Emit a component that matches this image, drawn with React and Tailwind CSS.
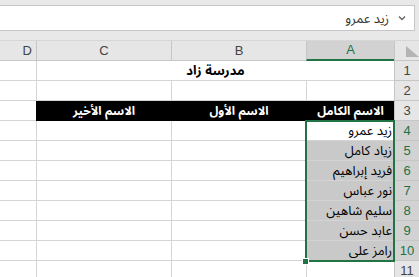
import React from 'react';

const names = ['زيد عمرو', 'زياد كامل', 'فريد إبراهيم', 'نور عباس', 'سليم شاهين', 'عابد حسن', 'رامز على'];

const font = { fontFamily: '"Liberation Sans", "Noto Sans Arabic", "Noto Naskh Arabic", "DejaVu Sans", sans-serif' };

const RowHead = ({ n, selected }) => (
  <div
    className={`h-[20px] flex items-center justify-center text-[13px] border-b border-l border-[#c6c6c6] ${
      selected ? 'bg-[#d2d2d2] text-[#217346]' : 'bg-[#e6e6e6] text-[#444]'
    }`}
  >
    {n}
  </div>
);

const Cell = ({ children, className = '' }) => (
  <div className={`h-[20px] border-b border-l border-[#d4d4d4] whitespace-nowrap ${className}`}>{children}</div>
);

const App = () => {
  return (
    <div dir="rtl" className="relative w-[419px] h-[277px] overflow-hidden bg-white text-black" style={font}>
      {/* formula bar */}
      <div className="h-[41px] bg-[#e8e8e8] pt-[5px] border-b border-[#d6d6d6]">
        <div className="h-[26px] mr-[4px] ml-[-1px] bg-white border border-[#c6c6c6] flex items-center gap-[9px] pr-[8px]">
          <svg width="8" height="6" viewBox="0 0 8 6" className="shrink-0">
            <path d="M1 1.5 L4 4.5 L7 1.5" fill="none" stroke="#666" strokeWidth="1.4" />
          </svg>
          <span className="text-[13px] text-[#333] leading-none">زيد عمرو</span>
        </div>
      </div>

      {/* sheet grid */}
      <div className="grid grid-cols-[25px_88px_135px_135px_36px]">
        {/* column headers */}
        <div className="h-[20px] bg-[#e6e6e6] border-b border-l border-[#c6c6c6] flex items-end justify-start pl-[9px] pb-[3px]">
          <svg width="13" height="11" viewBox="0 0 13 11">
            <path d="M0 0 L0 11 L13 11 Z" fill="#b4b4b4" />
          </svg>
        </div>
        <div className="h-[20px] bg-[#d2d2d2] border-l border-[#c6c6c6] border-b-2 border-b-[#217346] flex items-center justify-center text-[13px] text-[#217346]">
          A
        </div>
        <div className="h-[20px] bg-[#e6e6e6] border-l border-b border-[#c6c6c6] flex items-center justify-center text-[13px] text-[#444]">
          B
        </div>
        <div className="h-[20px] bg-[#e6e6e6] border-l border-b border-[#c6c6c6] flex items-center justify-center text-[13px] text-[#444]">
          C
        </div>
        <div className="h-[20px] bg-[#e6e6e6] border-b border-[#c6c6c6] flex items-center justify-start pr-[4px] text-[13px] text-[#444]">
          D
        </div>

        {/* row 1: merged title */}
        <RowHead n={1} />
        <Cell className="col-span-3 flex items-center justify-center font-bold text-[13px]">مدرسة زاد</Cell>
        <Cell className="border-l-0" />

        {/* row 2 */}
        <RowHead n={2} />
        <Cell />
        <Cell />
        <Cell />
        <Cell className="border-l-0" />

        {/* row 3: column titles */}
        <RowHead n={3} />
        {['الاسم الكامل', 'الاسم الأول', 'الاسم الأخير'].map((t) => (
          <Cell key={t} className="bg-black border-black text-white font-bold text-[12px] flex items-center justify-center">
            {t}
          </Cell>
        ))}
        <Cell className="border-l-0" />

        {/* rows 4-10: names */}
        {names.map((name, i) => (
          <React.Fragment key={name}>
            <RowHead n={i + 4} selected />
            <Cell className={`flex items-center pr-[2px] text-[13px] ${i === 0 ? 'bg-white' : 'bg-[#c9c9c9]'}`}>{name}</Cell>
            <Cell />
            <Cell />
            <Cell className="border-l-0" />
          </React.Fragment>
        ))}

        {/* row 11 */}
        <RowHead n={11} />
        <Cell />
        <Cell />
        <Cell />
        <Cell className="border-l-0" />
      </div>

      {/* selection outline A4:A10 */}
      <div className="absolute left-[305px] top-[120px] w-[90px] h-[142px] border-2 border-[#217346] pointer-events-none" />
      <div className="absolute left-[302px] top-[258px] w-[7px] h-[7px] bg-[#217346] border border-white" />
    </div>
  );
};

export default App;
